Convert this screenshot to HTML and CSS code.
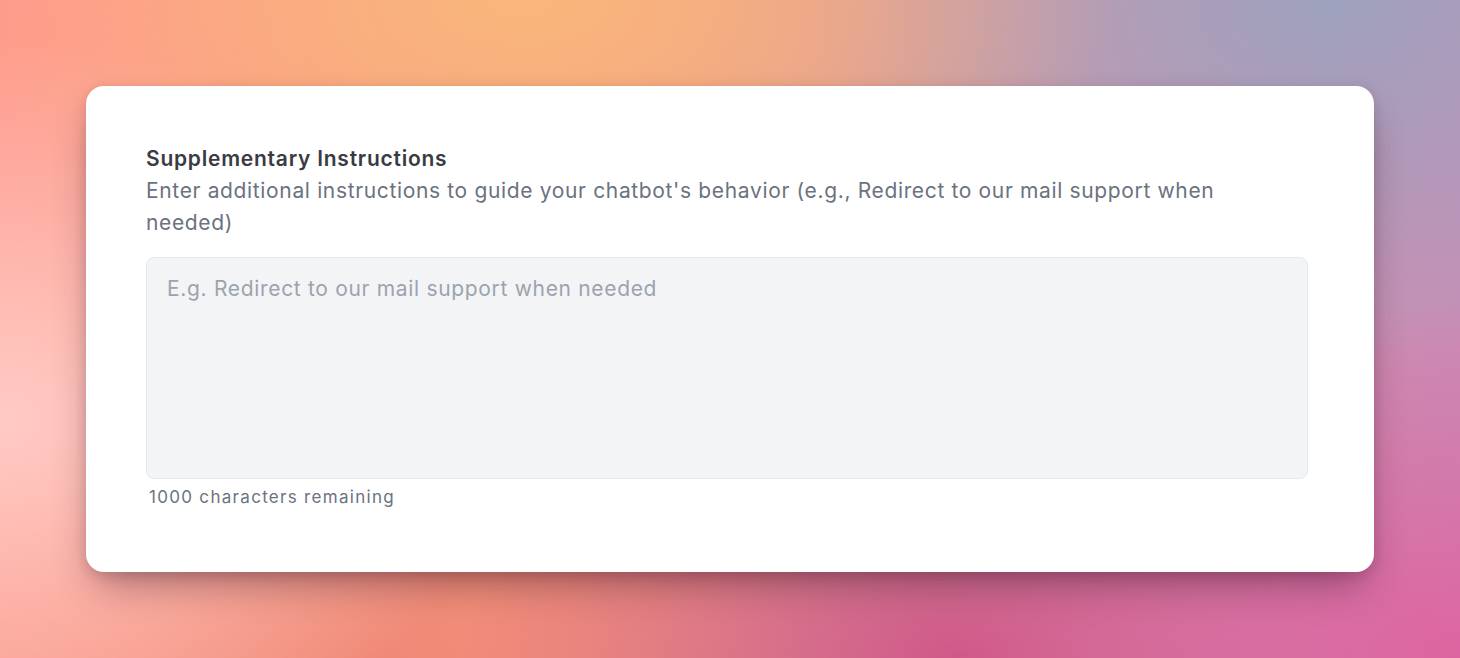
FILE: index.html
```html
<!DOCTYPE html>
<html lang="en">
<head>
<meta charset="utf-8">
<title>Supplementary Instructions</title>
<link rel="stylesheet" href="styles.css">
</head>
<body>
<main class="stage">
  <section class="card">
    <label class="field-label" for="instructions">Supplementary Instructions</label>
    <p class="field-desc">Enter additional instructions to guide your chatbot's behavior (e.g., Redirect to our mail support when needed)</p>
    <textarea id="instructions" class="field-input" placeholder="E.g. Redirect to our mail support when needed"></textarea>
    <p class="field-count">1000 characters remaining</p>
  </section>
</main>
</body>
</html>
```
FILE: styles.css
```css
* { box-sizing: border-box; }
html, body { margin: 0; height: 100%; }
body {
  font-family: Inter, "Noto Sans", sans-serif;
  overflow: hidden;
}
.stage {
  width: 1460px;
  height: 658px;
  padding: 86px 86px 0 86px;
  background:
    radial-gradient(ellipse 500px 380px at 0px 420px, rgba(255,205,200,0.95), rgba(255,205,200,0) 100%),
    radial-gradient(ellipse 600px 300px at 520px 0px, rgba(250,182,124,1), rgba(250,182,124,0) 100%),
    radial-gradient(ellipse 520px 360px at 1330px 0px, rgba(158,162,190,1), rgba(158,162,190,0) 100%),
    radial-gradient(ellipse 520px 360px at 1460px 658px, rgba(222,100,160,1), rgba(222,100,160,0) 100%),
    radial-gradient(ellipse 500px 260px at 960px 658px, rgba(208,88,136,1), rgba(208,88,136,0) 100%),
    radial-gradient(ellipse 500px 300px at 380px 658px, rgba(240,136,118,1), rgba(240,136,118,0) 100%),
    radial-gradient(ellipse 380px 280px at 0px 0px, rgba(255,152,142,1), rgba(255,152,142,0) 100%),
    linear-gradient(90deg, #ff9b8c 0%, #f3a080 40%, #cf98a8 70%, #c88eb6 100%);
}
.card {
  width: 1288px;
  height: 486px;
  background: #ffffff;
  border-radius: 18px;
  padding: 57px 66px 0 60px;
  display: flex;
  flex-direction: column;
  box-shadow: 0 20px 40px -10px rgba(60, 20, 40, 0.45), 0 4px 12px rgba(60, 20, 40, 0.15);
}
.field-label {
  display: block;
  font-size: 21px;
  line-height: 32px;
  letter-spacing: 0.75px;
  font-weight: 600;
  color: #3a3b42;
}
.field-desc {
  margin: 0;
  max-width: 1110px;
  font-size: 21px;
  line-height: 32px;
  letter-spacing: 0.65px;
  color: #6b7280;
}
.field-input {
  display: block;
  margin-top: 18px;
  width: 1162px;
  height: 222px;
  resize: none;
  background: #f3f4f6;
  border: 1px solid #e5e7eb;
  border-radius: 8px;
  padding: 17px 20px 16px;
  font-family: Inter, "Noto Sans", sans-serif;
  font-size: 21px;
  line-height: 28px;
  letter-spacing: 0.68px;
  color: #374151;
  outline: none;
}
.field-input::placeholder { color: #9ca3af; }
.field-count {
  margin: 6px 0 0 3px;
  font-size: 17px;
  line-height: 24px;
  letter-spacing: 1.3px;
  color: #6b7280;
}
```
